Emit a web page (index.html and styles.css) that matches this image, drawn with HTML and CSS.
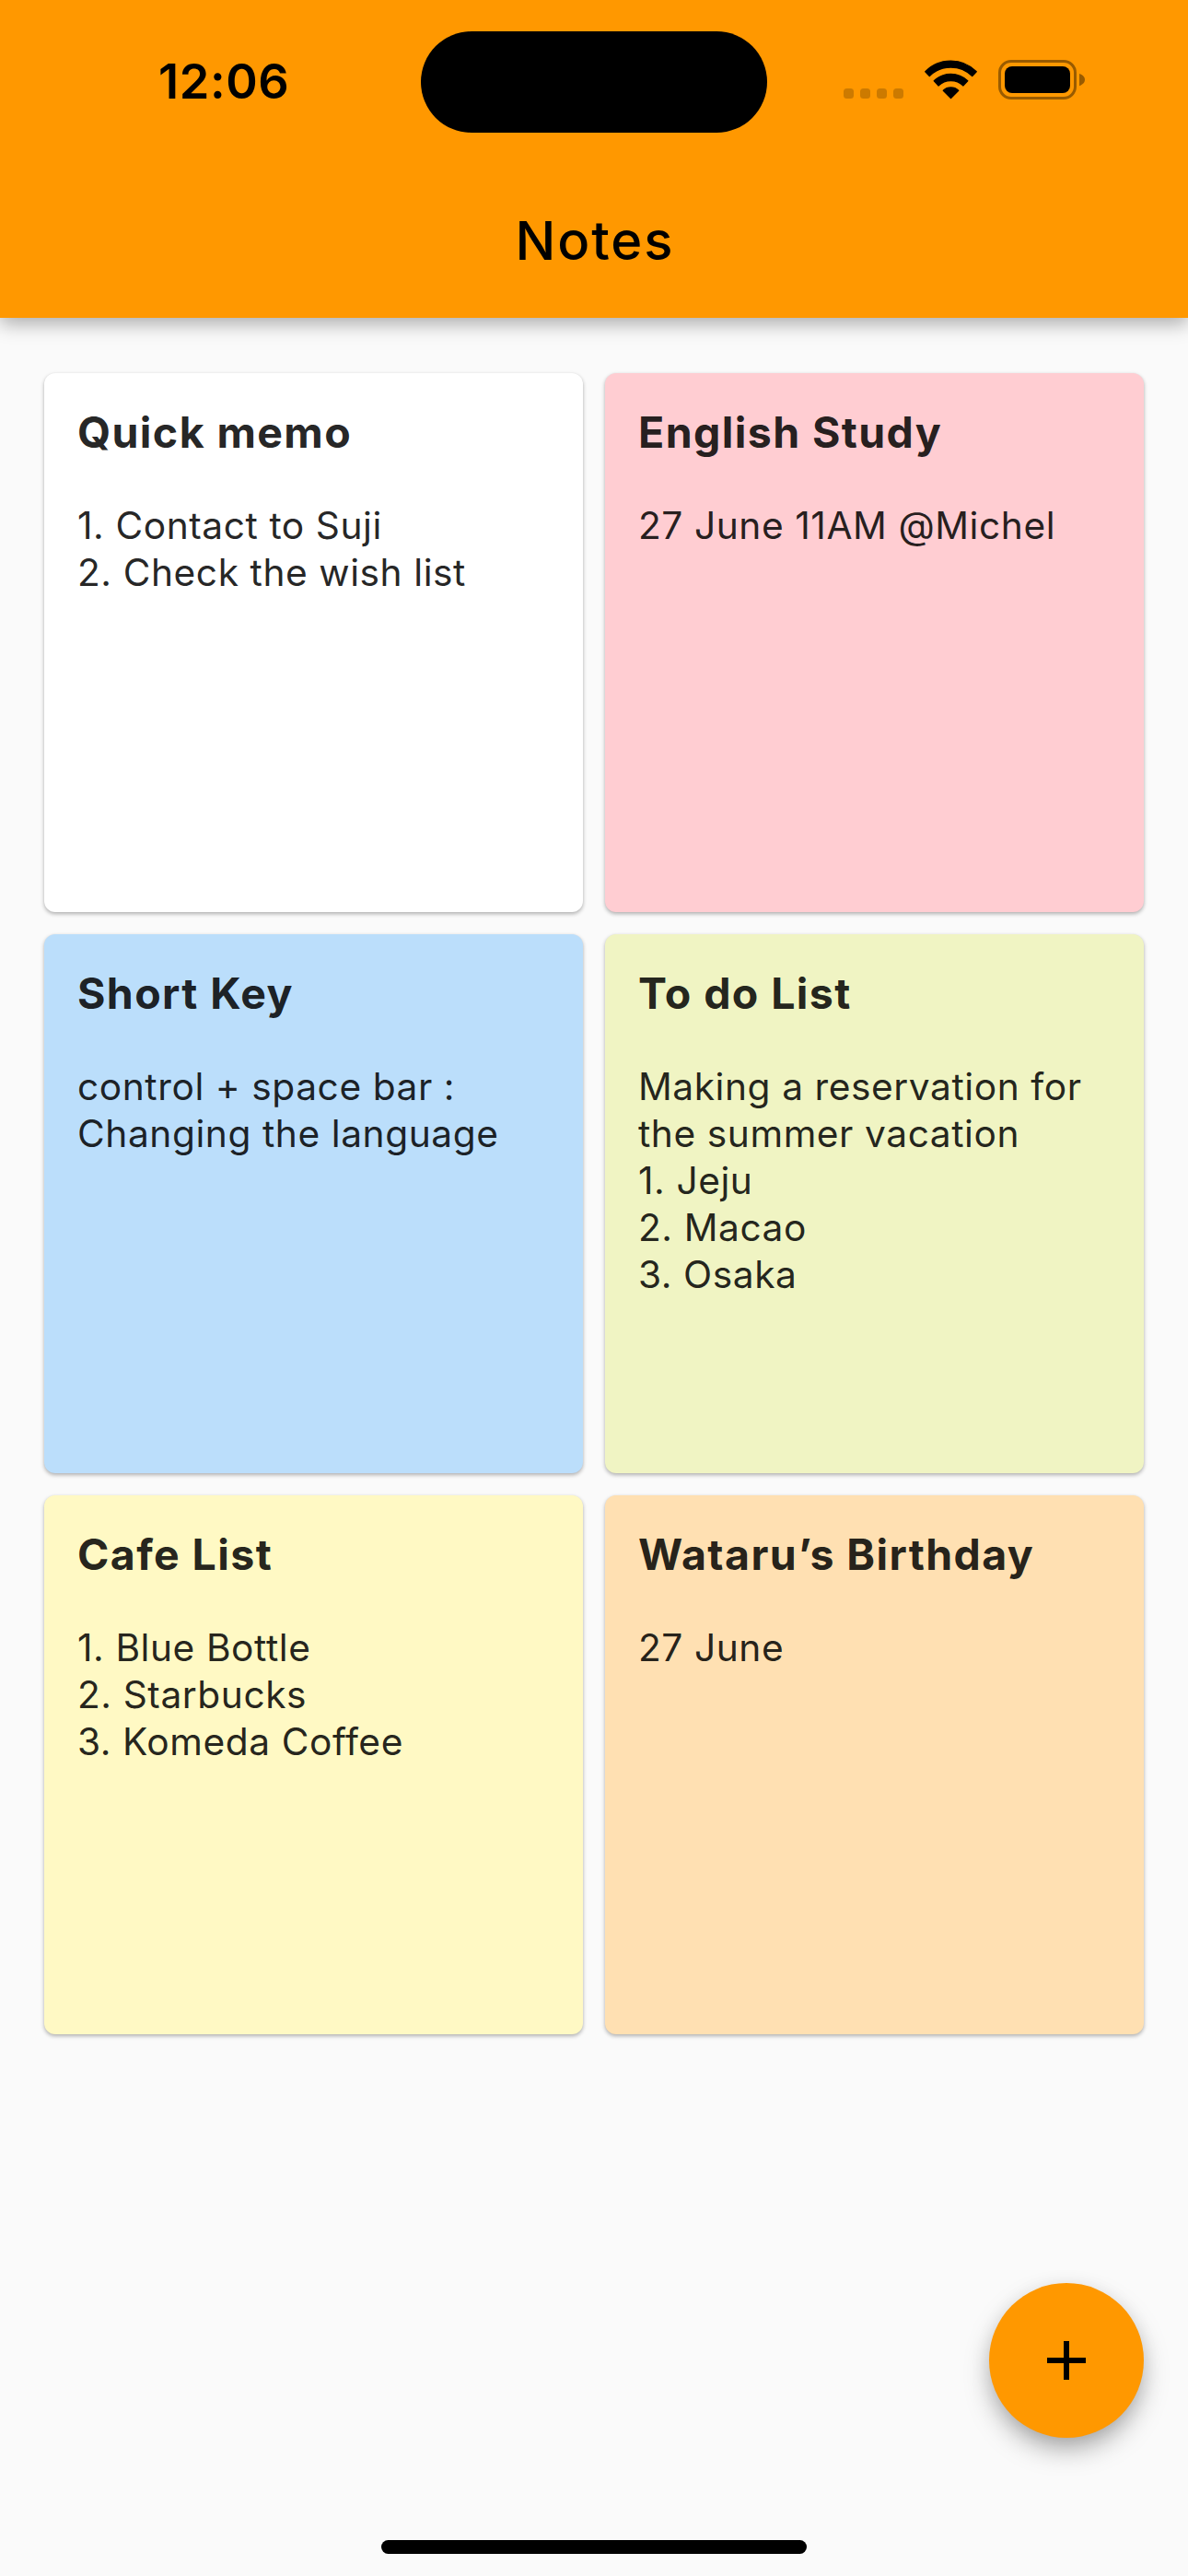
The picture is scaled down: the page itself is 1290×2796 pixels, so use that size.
FILE: index.html
```html
<!DOCTYPE html>
<html lang="en">
<head>
<meta charset="utf-8">
<title>Notes</title>
<link rel="stylesheet" href="styles.css">
</head>
<body>
<div class="screen">
  <header class="app-bar">
    <div class="status-bar">
      <div class="status-time">12:06</div>
      <div class="island"></div>
      <div class="status-icons">
        <svg width="65" height="43" viewBox="0 0 65 43" fill="#cc7a00">
          <rect x="0" y="31" width="11" height="11" rx="3.5"/>
          <rect x="18" y="31" width="11" height="11" rx="3.5"/>
          <rect x="36" y="31" width="11" height="11" rx="3.5"/>
          <rect x="54" y="31" width="11" height="11" rx="3.5"/>
        </svg>
        <svg width="57" height="43" viewBox="0 0 57 43" fill="#000" stroke="#000" stroke-width="1.4" stroke-linejoin="round">
          <path d="M.8 12.8A38.6 38.6 0 0 1 56.2 12.8L51.7 17.5A33 33 0 0 0 5.3 17.5Z"/>
          <path d="M10.3 22.8A26 26 0 0 1 46.7 22.8L42 27.9A19.5 19.5 0 0 0 15 27.9Z"/>
          <path d="M20.3 33.3A12 12 0 0 1 36.7 33.3L28.5 41.4Z"/>
        </svg>
        <svg width="94" height="43" viewBox="0 0 94 43">
          <rect x="1.5" y="1.5" width="82" height="40" rx="12.5" fill="none" stroke="#995b00" stroke-width="3"/>
          <rect x="7" y="7" width="71" height="29" rx="8" fill="#000"/>
          <path d="M88 15C91.500 16 94 18.500 94 21.500S91.500 27 88 28.300Z" fill="#995b00"/>
        </svg>
      </div>
    </div>
    <h1 class="title">Notes</h1>
  </header>

  <main class="notes">
    <article class="note white">
      <h2 class="note-title">Quick memo</h2>
      <p class="note-body">1. Contact to Suji<br>2. Check the wish list</p>
    </article>
    <article class="note pink">
      <h2 class="note-title">English Study</h2>
      <p class="note-body">27 June 11AM @Michel</p>
    </article>
    <article class="note blue">
      <h2 class="note-title">Short Key</h2>
      <p class="note-body">control + space bar :<br>Changing the language</p>
    </article>
    <article class="note lime">
      <h2 class="note-title">To do List</h2>
      <p class="note-body">Making a reservation for<br>the summer vacation<br>1. Jeju<br>2. Macao<br>3. Osaka</p>
    </article>
    <article class="note yellow">
      <h2 class="note-title">Cafe List</h2>
      <p class="note-body">1. Blue Bottle<br>2. Starbucks<br>3. Komeda Coffee</p>
    </article>
    <article class="note orange">
      <h2 class="note-title">Wataru’s Birthday</h2>
      <p class="note-body">27 June</p>
    </article>
  </main>

  <button class="fab" aria-label="Add note">
    <svg width="42" height="42" viewBox="0 0 42 42" fill="#000"><path d="M18 0h6v18h18v6H24v18h-6V24H0v-6h18z"/></svg>
  </button>
  <div class="home-indicator"></div>
</div>
</body>
</html>
```
FILE: styles.css
```css
* {
  box-sizing: border-box;
  margin: 0;
  padding: 0;
}

body {
  background: #fafafa;
  font-family: Inter, "Liberation Sans", sans-serif;
}

.screen {
  position: relative;
  width: 1290px;
  height: 2796px;
  overflow: hidden;
  background: #fafafa;
}

.app-bar {
  height: 345px;
  background: #ff9800;
  box-shadow: 0 6px 20px rgba(0, 0, 0, 0.33);
}

.status-bar {
  display: grid;
  grid-template-columns: 457px 376px 457px;
  height: 177px;
}

.status-time {
  padding: 58px 0 0 172px;
  font-size: 52.3px;
  font-weight: 600;
  line-height: 60px;
  letter-spacing: 0.6px;
  color: #000;
}

.island {
  height: 110px;
  margin-top: 34px;
  border-radius: 55px;
  background: #000;
}

.status-icons {
  display: flex;
  gap: 23px;
  padding: 65px 0 0 83px;
}

.title {
  height: 168px;
  padding-left: 2px;
  text-align: center;
  font-size: 58px;
  font-weight: 450;
  line-height: 168px;
  letter-spacing: 1.9px;
  color: #000;
}

.notes {
  display: grid;
  grid-template-columns: 585px 585px;
  grid-auto-rows: 585px;
  gap: 24px;
  padding: 60px 48px;
}

.note {
  padding: 36px;
  border-radius: 12px;
  color: rgba(0, 0, 0, 0.87);
  box-shadow: 0 2px 4px rgba(0, 0, 0, 0.3), 0 0 2px rgba(0, 0, 0, 0.04);
}

.white { background: #fff; }
.pink { background: #ffcdd2; }
.blue { background: #bbdefb; }
.lime { background: #f0f4c3; }
.yellow { background: #fff9c4; }
.orange { background: #ffe0b2; }

.note-title {
  font-size: 46.5px;
  font-weight: 700;
  line-height: 56px;
  letter-spacing: 1.4px;
  white-space: nowrap;
}

.note-body {
  margin-top: 48px;
  font-size: 40.7px;
  line-height: 51px;
  letter-spacing: 0.56px;
  white-space: nowrap;
}

.fab {
  position: absolute;
  right: 48px;
  bottom: 150px;
  display: flex;
  align-items: center;
  justify-content: center;
  width: 168px;
  height: 168px;
  border: 0;
  border-radius: 50%;
  background: #ff9800;
  box-shadow: 0 14px 30px -4px rgba(0, 0, 0, 0.36), 0 2px 20px rgba(0, 0, 0, 0.06);
}

.home-indicator {
  position: absolute;
  left: 414px;
  bottom: 24px;
  width: 462px;
  height: 15px;
  border-radius: 8px;
  background: #000;
}
```
